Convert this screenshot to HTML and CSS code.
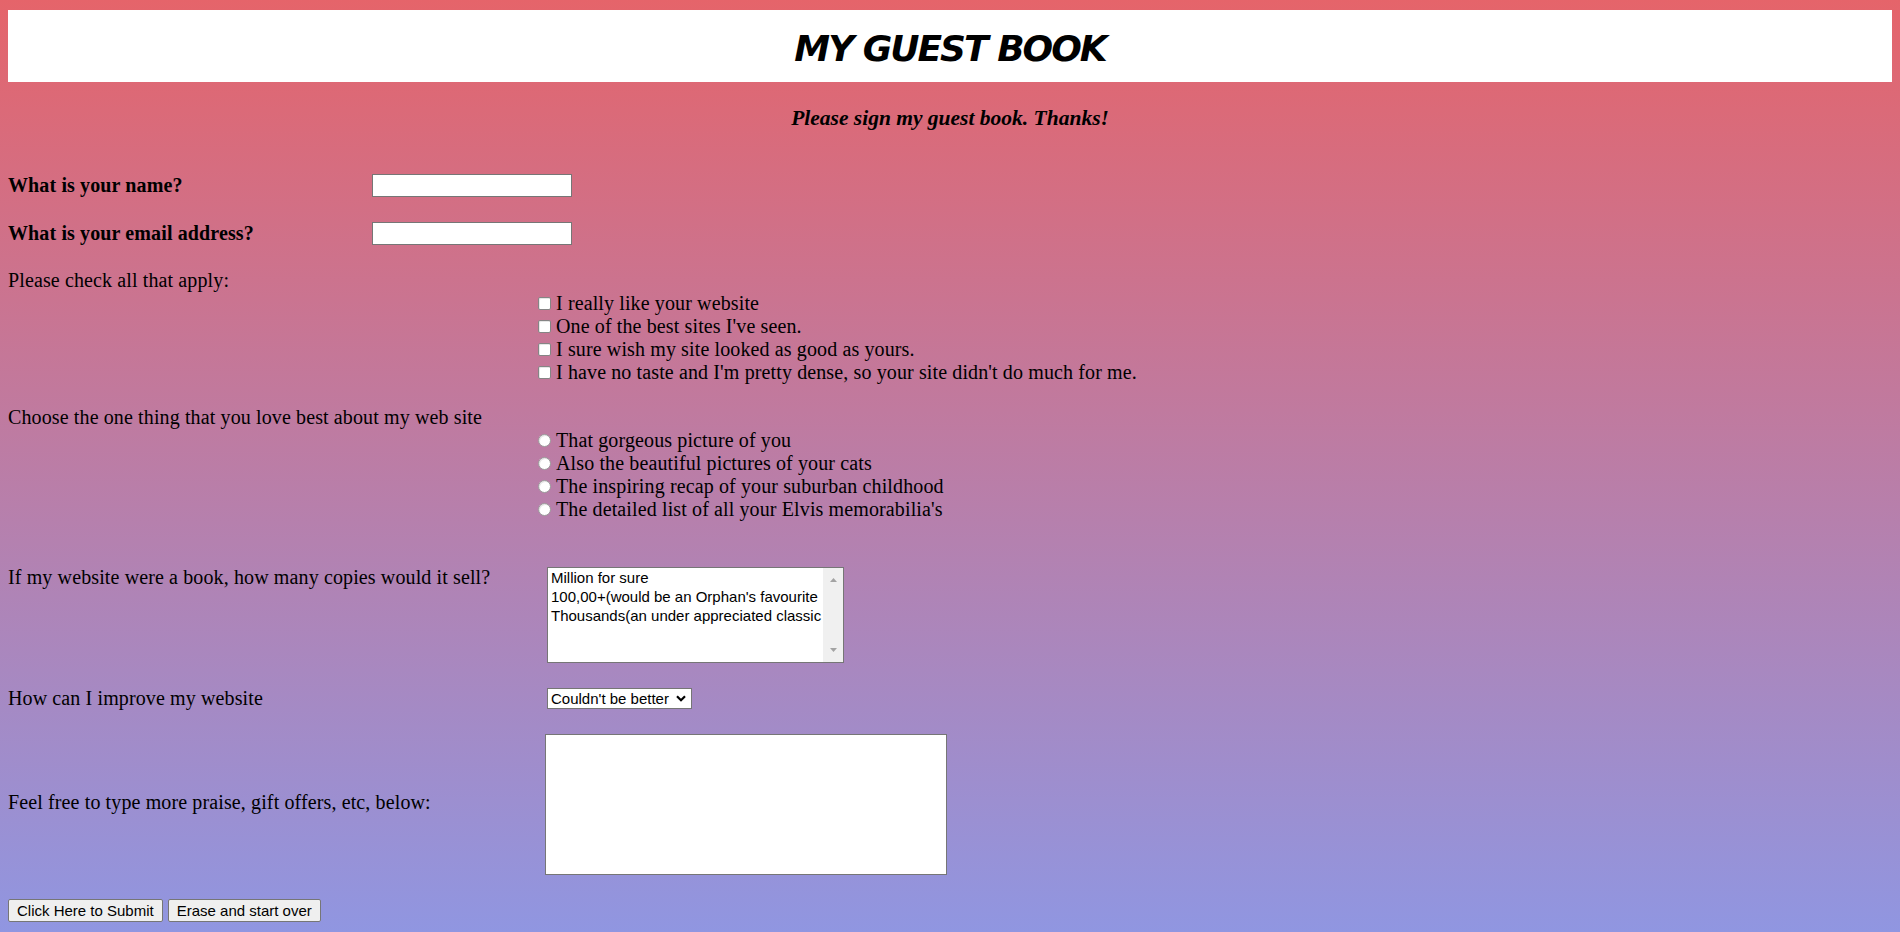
FILE: index.html
```html
<!DOCTYPE html>
<html lang="en">
<head>
<meta charset="utf-8">
<title>My Guest Book</title>
<link rel="stylesheet" href="styles.css">
</head>
<body>
<header class="banner">
  <h1 class="banner-title">MY GUEST BOOK</h1>
</header>
<p class="intro">Please sign my guest book. Thanks!</p>

<form class="guest-form">
  <div class="field-row row-name">
    <label class="q-strong" for="name">What is your name?</label>
    <input class="text-field" type="text" id="name">
  </div>
  <div class="field-row row-email">
    <label class="q-strong" for="email">What is your email address?</label>
    <input class="text-field" type="text" id="email">
  </div>

  <div class="group group-checks">
    <div class="group-label">Please check all that apply:</div>
    <ul class="choices">
      <li class="choice"><input class="tick" type="checkbox"><span>I really like your website</span></li>
      <li class="choice"><input class="tick" type="checkbox"><span>One of the best sites I've seen.</span></li>
      <li class="choice"><input class="tick" type="checkbox"><span>I sure wish my site looked as good as yours.</span></li>
      <li class="choice"><input class="tick" type="checkbox"><span>I have no taste and I'm pretty dense, so your site didn't do much for me.</span></li>
    </ul>
  </div>

  <div class="group group-radios">
    <div class="group-label">Choose the one thing that you love best about my web site</div>
    <ul class="choices">
      <li class="choice"><input class="tick round" type="radio" name="best"><span>That gorgeous picture of you</span></li>
      <li class="choice"><input class="tick round" type="radio" name="best"><span>Also the beautiful pictures of your cats</span></li>
      <li class="choice"><input class="tick round" type="radio" name="best"><span>The inspiring recap of your suburban childhood</span></li>
      <li class="choice"><input class="tick round" type="radio" name="best"><span>The detailed list of all your Elvis memorabilia's</span></li>
    </ul>
  </div>

  <div class="field-row row-copies">
    <div class="q-plain">If my website were a book, how many copies would it sell?</div>
    <div class="listbox" role="listbox">
      <div class="listbox-options">
        <div class="listbox-option" role="option">Million for sure</div>
        <div class="listbox-option" role="option">100,00+(would be an Orphan's favourite</div>
        <div class="listbox-option" role="option">Thousands(an under appreciated classic</div>
      </div>
      <div class="listbox-scroll">
        <svg class="arrow" width="7" height="4" viewBox="0 0 7 4"><polygon points="0,4 3.5,0 7,4"/></svg>
        <svg class="arrow" width="7" height="4" viewBox="0 0 7 4"><polygon points="0,0 3.5,4 7,0"/></svg>
      </div>
    </div>
  </div>

  <div class="field-row row-improve">
    <label class="q-plain" for="improve">How can I improve my website</label>
    <div class="dropdown">
      <select class="dropdown-select" id="improve">
        <option>Couldn't be better</option>
      </select>
      <svg class="dropdown-chevron" width="10" height="7" viewBox="0 0 10 7"><path d="M1 1.2 L5 5.2 L9 1.2" fill="none" stroke="#000" stroke-width="2.2"/></svg>
    </div>
  </div>

  <div class="field-row row-comments">
    <label class="q-plain q-comments" for="comments">Feel free to type more praise, gift offers, etc, below:</label>
    <textarea class="comments" id="comments"></textarea>
  </div>

  <div class="actions">
    <button class="btn" type="submit">Click Here to Submit</button>
    <button class="btn" type="reset">Erase and start over</button>
  </div>
</form>
</body>
</html>
```
FILE: styles.css
```css
html {
  min-height: 100%;
  background: linear-gradient(to bottom, #e5646a 0%, #bb7da6 50%, #9096e1 100%);
}

body {
  margin: 0;
  padding: 10px 8px 0;
  font-family: "Liberation Serif", "Times New Roman", serif;
  color: #000;
}

.banner {
  height: 72px;
  box-sizing: border-box;
  padding-top: 5px;
  background: #fff;
  text-align: center;
}

.banner-title {
  margin: 0;
  font-family: "Comic Sans MS", "DejaVu Sans", sans-serif;
  font-style: italic;
  font-weight: bold;
  font-size: 36px;
  line-height: 67px;
  letter-spacing: -2px;
}

.intro {
  margin: 24px 0 0;
  text-align: center;
  font-style: italic;
  font-weight: bold;
  font-size: 21.5px;
  line-height: 25px;
}

.guest-form {
  display: flex;
  flex-direction: column;
  font-size: 20px;
  line-height: 23px;
  letter-spacing: 0.12px;
}

.field-row {
  display: grid;
  align-items: center;
}

.row-name {
  grid-template-columns: 364px 200px;
  margin-top: 43px;
}

.row-email {
  grid-template-columns: 364px 200px;
  margin-top: 25px;
}

.q-strong {
  font-weight: bold;
}

.text-field {
  width: 200px;
  height: 23px;
  box-sizing: border-box;
  margin: 0;
  padding: 1px 2px;
  border: 1px solid #767676;
  background: #fff;
  font: 15px "Liberation Sans", Arial, sans-serif;
}

.group-checks {
  margin-top: 24px;
}

.group-radios {
  margin-top: 22px;
}

.choices {
  list-style: none;
  margin: 0;
  padding: 0 0 0 530px;
}

.choice {
  display: flex;
  align-items: center;
  height: 23px;
  white-space: nowrap;
}

.tick {
  appearance: none;
  -webkit-appearance: none;
  flex: none;
  width: 13px;
  height: 13px;
  box-sizing: border-box;
  margin: 0 5px 0 0;
  border: 1px solid #858585;
  border-radius: 2px;
  background: #fff;
  box-shadow: inset 1px 1px 0 #e6e6e6;
}

.tick.round {
  border-radius: 50%;
  border-color: #9a9a9a;
}

.row-copies {
  grid-template-columns: 539px 297px;
  align-items: start;
  margin-top: 45px;
}

.listbox {
  margin-top: 1px;
  height: 96px;
  box-sizing: border-box;
  display: flex;
  border: 1px solid #767676;
  background: #fff;
  letter-spacing: 0;
  font: 15px/19px "Liberation Sans", Arial, sans-serif;
}

.listbox-options {
  flex: 1;
  min-width: 0;
  overflow: hidden;
  padding-left: 3px;
  white-space: nowrap;
}

.listbox-scroll {
  flex: none;
  width: 20px;
  display: flex;
  flex-direction: column;
  justify-content: space-between;
  align-items: center;
  padding: 10px 0;
  box-sizing: border-box;
  background: #f0f0f0;
}

.arrow {
  display: block;
  fill: #a3a3a3;
}

.row-improve {
  grid-template-columns: 539px 145px;
  margin-top: 24px;
}

.dropdown {
  position: relative;
  width: 145px;
  height: 21px;
}

.dropdown-select {
  appearance: none;
  -webkit-appearance: none;
  display: block;
  width: 145px;
  height: 21px;
  box-sizing: border-box;
  margin: 0;
  padding: 0 20px 0 3px;
  border: 1px solid #767676;
  border-radius: 0;
  background: #fff;
  color: #000;
  font: 15px/19px "Liberation Sans", Arial, sans-serif;
}

.dropdown-chevron {
  position: absolute;
  right: 6px;
  top: 7px;
  pointer-events: none;
}

.row-comments {
  grid-template-columns: 537px 402px;
  margin-top: 24px;
}

.q-comments {
  margin-bottom: 4px;
}

.comments {
  display: block;
  width: 402px;
  height: 141px;
  box-sizing: border-box;
  margin: 0;
  border: 1px solid #767676;
  background: #fff;
  resize: none;
  font: 15px "Liberation Sans", Arial, sans-serif;
}

.actions {
  display: flex;
  gap: 5px;
  margin-top: 24px;
}

.btn {
  height: 23px;
  box-sizing: border-box;
  margin: 0;
  padding: 2px 8px;
  border: 1px solid #767676;
  border-radius: 2px;
  background: #efefef;
  color: #000;
  letter-spacing: 0;
  font: 15px/17px "Liberation Sans", Arial, sans-serif;
}
```
